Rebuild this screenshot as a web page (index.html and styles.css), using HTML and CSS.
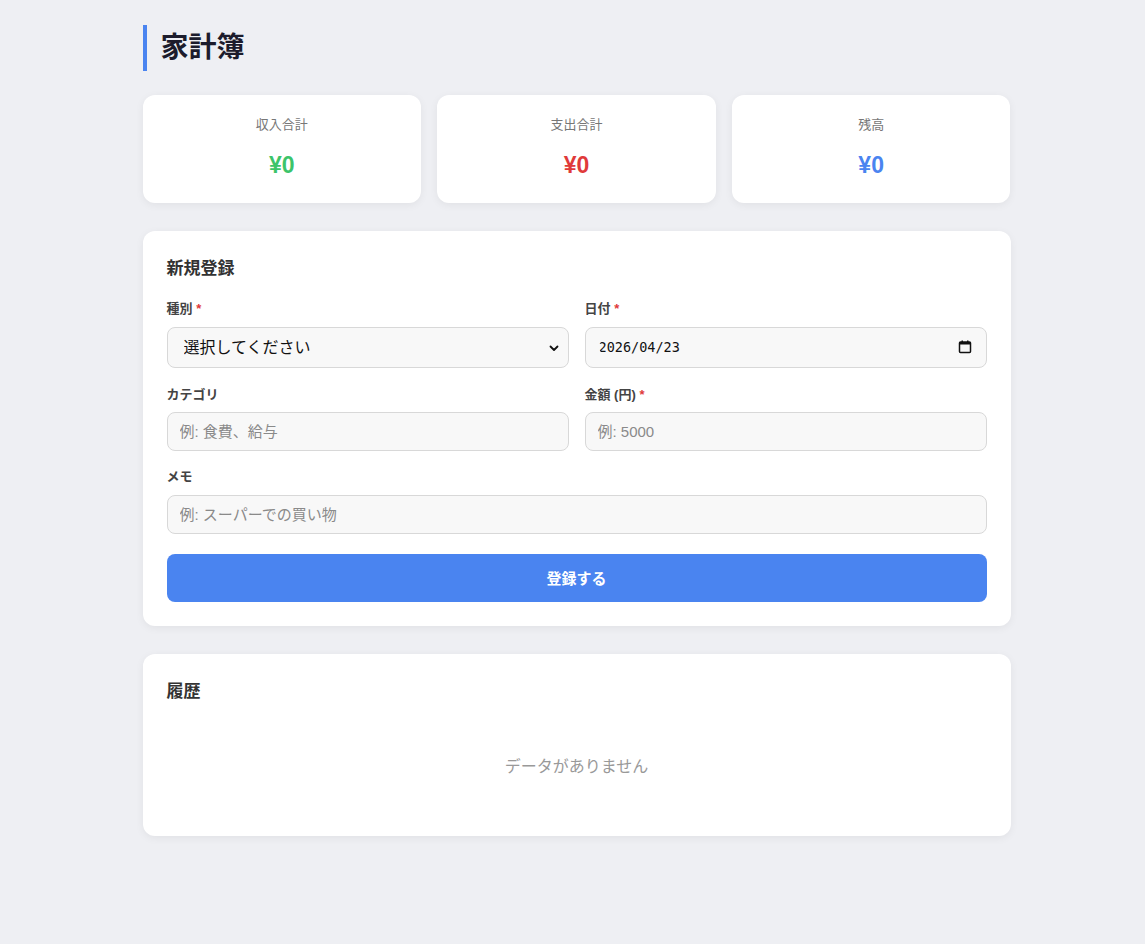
FILE: index.html
```html
<!DOCTYPE html>
<html lang="ja">
  <head>
    <meta charset="UTF-8" />
    <meta name="viewport" content="width=device-width, initial-scale=1.0" />
    <title>家計簿</title>
    <link rel="stylesheet" href="styles.css">
  </head>
  <body>
    <div class="wrap">
      <h1>家計簿</h1>

      <section class="summary">
        <div class="sum-card">
          <p class="sum-label">収入合計</p>
          <p class="sum-value income">¥0</p>
        </div>
        <div class="sum-card">
          <p class="sum-label">支出合計</p>
          <p class="sum-value expense">¥0</p>
        </div>
        <div class="sum-card">
          <p class="sum-label">残高</p>
          <p class="sum-value balance">¥0</p>
        </div>
      </section>

      <section class="card">
        <h2>新規登録</h2>
        <form>
          <div class="row">
            <div class="field">
              <label>種別 <span class="req">*</span></label>
              <div class="select-wrap">
                <select>
                  <option>選択してください</option>
                  <option>収入</option>
                  <option>支出</option>
                </select>
                <svg class="chevron" width="12" height="12" viewBox="0 0 12 12"><path d="M2.5 4.5 6 8l3.5-3.5" fill="none" stroke="#111" stroke-width="1.8" stroke-linecap="round" stroke-linejoin="round"/></svg>
              </div>
            </div>
            <div class="field">
              <label>日付 <span class="req">*</span></label>
              <div class="date-box">
                <input type="text" class="date-text" value="2026/04/23">
                <svg width="14" height="14" viewBox="0 0 14 14"><rect x="1.5" y="2" width="11" height="10.5" rx="1" fill="none" stroke="#111" stroke-width="1.5"/><rect x="1.5" y="2" width="11" height="2.5" fill="#111"/><rect x="3.5" y="0.5" width="1.5" height="2" fill="#111"/><rect x="9" y="0.5" width="1.5" height="2" fill="#111"/></svg>
              </div>
            </div>
          </div>
          <div class="row">
            <div class="field">
              <label>カテゴリ</label>
              <input type="text" placeholder="例: 食費、給与">
            </div>
            <div class="field">
              <label>金額 (円) <span class="req">*</span></label>
              <input type="text" placeholder="例: 5000">
            </div>
          </div>
          <div class="field memo">
            <label>メモ</label>
            <input type="text" placeholder="例: スーパーでの買い物">
          </div>
          <button type="button" class="btn">登録する</button>
        </form>
      </section>

      <section class="card">
        <h2>履歴</h2>
        <p class="empty">データがありません</p>
      </section>
    </div>
  </body>
</html>
```

FILE: styles.css
```css
* {
  box-sizing: border-box;
}

body {
  margin: 0;
  background-color: #eeeff3;
  font-family: "Liberation Sans", "Noto Sans CJK JP", sans-serif;
  color: #333;
}

.wrap {
  max-width: 868px;
  margin: 0 auto;
  padding: 25px 0 60px;
  position: relative;
  left: 4px;
}

h1 {
  margin: 0 0 24px;
  padding: 4px 0 4px 14px;
  border-left: 4px solid #4a84f0;
  font-size: 28px;
  line-height: 38px;
  color: #1c1c2c;
}

/* summary cards */
.summary {
  display: grid;
  grid-template-columns: repeat(3, 1fr);
  gap: 16px;
  margin-bottom: 28px;
}

.sum-card {
  background: white;
  border-radius: 12px;
  box-shadow: 0 2px 8px rgba(0, 0, 0, 0.06);
  padding: 20px 16px 23px;
  text-align: center;
}

.sum-label {
  margin: 0 0 15px;
  font-size: 13px;
  line-height: 20px;
  color: #777;
}

.sum-value {
  margin: 0;
  font-size: 23px;
  line-height: 30px;
  font-weight: bold;
}

.income {
  color: #3cc46a;
}
.expense {
  color: #e03a3a;
}
.balance {
  color: #4a84f0;
}

/* white panels */
.card {
  background: white;
  border-radius: 12px;
  box-shadow: 0 2px 8px rgba(0, 0, 0, 0.06);
  padding: 24px;
  margin-bottom: 28px;
}

.card h2 {
  margin: 0 0 17px;
  font-size: 17px;
  line-height: 27px;
  color: #333;
}

.row {
  display: grid;
  grid-template-columns: 1fr 1fr;
  gap: 16px;
}

.field {
  margin-bottom: 16px;
}

.row:first-child .field {
  margin-bottom: 17px;
}

.field.memo {
  margin-bottom: 20px;
}

label {
  display: block;
  margin-bottom: 8px;
  font-size: 13px;
  line-height: 19.5px;
  font-weight: bold;
  color: #444;
}

.req {
  color: #e03a3a;
}

input,
select {
  width: 100%;
  height: 39px;
  padding: 0 12px;
  border: 1px solid #d8d8d8;
  border-radius: 8px;
  background: #f8f8f8;
  font-family: inherit;
  font-size: 15px;
  color: #222;
}

input::placeholder {
  color: #8a8a8a;
}

.select-wrap {
  position: relative;
}

select {
  height: 41px;
  padding: 0 16px;
  appearance: none;
  font-size: 16px;
  color: #111;
}

.chevron {
  position: absolute;
  right: 9px;
  top: 15px;
  pointer-events: none;
}

.date-box {
  display: flex;
  align-items: center;
  height: 41px;
  padding: 0 14px 0 13px;
  border: 1px solid #d8d8d8;
  border-radius: 8px;
  background: #f8f8f8;
}

.date-box .date-text {
  flex: 1;
  height: auto;
  padding: 0;
  border: none;
  background: none;
  font-family: "DejaVu Sans Mono", "Liberation Mono", monospace;
  font-size: 13.5px;
  color: #111;
}

.btn {
  display: block;
  width: 100%;
  height: 48px;
  border: none;
  border-radius: 8px;
  background: #4a84f0;
  color: white;
  font-family: inherit;
  font-size: 15px;
  font-weight: bold;
  cursor: pointer;
}

.empty {
  margin: 0;
  padding: 34px 0 34px;
  text-align: center;
  font-size: 16px;
  line-height: 22px;
  color: #999;
}
```
